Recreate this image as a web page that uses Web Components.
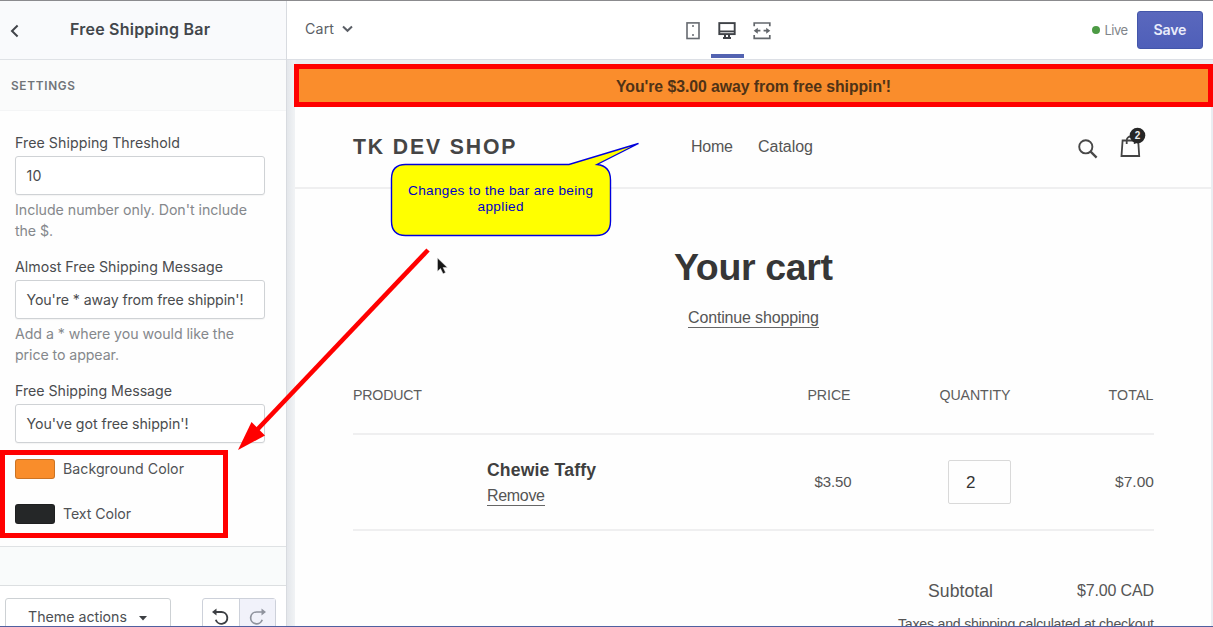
<!DOCTYPE html>
<html lang="en">
<head>
<meta charset="utf-8">
<title>Free Shipping Bar</title>
<style>
html,body{margin:0;height:100%;overflow:hidden;background:#fff}
</style>
</head>
<body>
<theme-editor></theme-editor>
<script>
const define = (name, html, ready) => customElements.define(name, class extends HTMLElement {
  connectedCallback() {
    if (this.shadowRoot) return;
    const t = document.createElement('template');
    t.innerHTML = html;
    this.attachShadow({mode: 'open'}).append(t.content.cloneNode(true));
    if (ready) ready(this, this.shadowRoot);
  }
});

/* Single line of text tracked out or in to a given measure. */
define('text-line', `<style>:host{display:block;white-space:nowrap;flex:none}span{display:inline-block;white-space:nowrap}</style><span><slot></slot></span>`, (el, root) => {
  const w = parseFloat(el.getAttribute('w'));
  if (!w) return;
  const s = root.querySelector('span');
  const n = el.textContent.length;
  el.style.width = w + 'px';
  requestAnimationFrame(() => {
    s.style.letterSpacing = '0px';
    s.style.letterSpacing = ((w - s.getBoundingClientRect().width) / (n - 1)) + 'px';
  });
});

define('setting-field', `<style>
:host{display:block;font-size:14.2px;line-height:21px;color:#4a4c4f}
.l{height:24px}
.box{box-sizing:border-box;width:250px;height:39px;border:1px solid #cfd2d5;border-radius:3px;background:#fff;padding:0 10.5px;display:flex;align-items:center;color:#4a4c4e;box-shadow:0 1px 1px #0000000a}
.h{padding-top:3.500px;color:#85888c}
</style><div class="l"><slot name="label"></slot></div><div class="box"><slot></slot></div><div class="h"><slot name="help"></slot></div>`);

define('color-setting', `<style>
:host{display:flex;align-items:center;gap:8px;height:21px;font-size:14.2px;line-height:21px;color:#505255}
i{box-sizing:border-box;width:40px;height:20px;border-radius:3px;border:1px solid #0000002e;background:var(--swatch)}
</style><i></i><slot></slot>`);

define('settings-panel', `<style>
:host{box-sizing:border-box;width:287px;height:627px;display:flex;flex-direction:column;background:#f9fbfb;border-right:1px solid #d8dbe0;font-family:Inter,sans-serif;overflow:hidden}
header{box-sizing:border-box;height:60px;flex:none;border-bottom:1px solid #dfe2e6;background:#f9fafc;display:flex;align-items:center;padding:0 0 1px 10px;font-weight:600;font-size:16px;color:#42464b}
header text-line{margin-left:51px}
header svg{margin-top:3px}
h2{margin:0;box-sizing:border-box;height:51px;flex:none;display:flex;align-items:center;padding:2px 0 0 11px;background:#fafbfb;border-bottom:1px solid #f4f5f6;font-size:11.8px;font-weight:600;color:#707479}
.body{box-sizing:border-box;height:436px;flex:none;background:#fefefe;border-bottom:1px solid #dfe2e4;padding:21px 0 0 15px}
setting-field{height:124.2px}
.colors{display:flex;flex-direction:column;gap:24px;margin-top:-46.3px}
footer{box-sizing:border-box;margin-top:38px;height:42px;flex:none;border-top:1px solid #dcdfe1;background:#fff;padding:12px 0 0 5px;display:flex;gap:31px;overflow:hidden}
.btn{box-sizing:border-box;width:166px;height:38px;flex:none;border:1px solid #cdd1d4;border-radius:3px;display:flex;align-items:center;padding:0 0 2px 22px;gap:12px;font-size:14.2px;color:#4c4f53}
.btn svg{margin-top:4px}
.grp{box-sizing:border-box;width:74px;height:38px;flex:none;border:1px solid #cdd1da;border-radius:3px;display:flex}
.grp div{flex:1;display:flex;align-items:center;justify-content:center}
.grp div+div{border-left:1px solid #cdd1da;background:#f1f2fa}
</style>
<header><svg width="9" height="14" viewBox="0 0 9 14" fill="none" stroke="#414449" stroke-width="2"><path d="M7.6 1.5 2 7l5.6 5.5"/></svg><text-line w="140">Free Shipping Bar</text-line></header>
<h2><text-line w="64">SETTINGS</text-line></h2>
<div class="body">
<setting-field><text-line slot="label" w="165">Free Shipping Threshold</text-line><text-line w="15">10</text-line><text-line slot="help" w="232">Include number only. Don't include</text-line><text-line slot="help" w="38">the $.</text-line></setting-field>
<setting-field><text-line slot="label" w="208">Almost Free Shipping Message</text-line><text-line w="217">You're * away from free shippin'!</text-line><text-line slot="help" w="219">Add a * where you would like the</text-line><text-line slot="help" w="104">price to appear.</text-line></setting-field>
<setting-field><text-line slot="label" w="157">Free Shipping Message</text-line><text-line w="162">You've got free shippin'!</text-line></setting-field>
<div class="colors">
<color-setting style="--swatch:#f98d2b"><text-line w="121">Background Color</text-line></color-setting>
<color-setting style="--swatch:#252728"><text-line w="68">Text Color</text-line></color-setting>
</div></div>
<footer><div class="btn"><text-line w="99">Theme actions</text-line><svg width="8" height="5"><path d="M0 0h8L4 4.5z" fill="#3c3f43"/></svg></div>
<div class="grp"><div><svg width="20" height="20" viewBox="0 0 20 20" fill="none" stroke="#3c3f43" stroke-width="1.9"><path d="M3 5h7.3a5.9 5.9 0 1 1-5.5 7.7"/><path d="M5.500 1.5 1 5l4.500 3.5z" fill="#3c3f43" stroke="none"/></svg></div><div><svg width="20" height="20" viewBox="0 0 20 20" fill="none" stroke="#8f939d" stroke-width="1.7"><path d="M17 5H9.7a5.9 5.9 0 1 0 5.5 7.7"/><path d="M14.500 1.5 19 5l-4.500 3.5z" fill="#8f939d" stroke="none"/></svg></div></div></footer>`);

define('editor-toolbar', `<style>
:host{box-sizing:border-box;height:60px;flex:none;border-bottom:1px solid #dcdfe5;background:#fff;display:grid;grid-template-columns:391px 1fr auto;font-family:Inter,sans-serif;font-size:14.2px;color:#5b5f66}
.page,.status{display:flex;align-items:center}
.page{padding-left:18px;gap:8px;padding-bottom:2px}
.devices{display:flex;align-items:stretch;padding-left:7px;height:59px}
.devices div{box-sizing:border-box;width:33px;display:flex;justify-content:center;padding-top:22px}
.devices .on{border-bottom:4px solid #5363b1;height:58px;margin:0 1.5px}
.devices div:first-child{margin-left:-9px}
.status{padding-right:10px;font-size:13px;color:#81858a}
i{width:8px;height:8px;border-radius:50%;background:#4c9a44;margin-right:5px}
b{box-sizing:border-box;width:66px;height:38px;margin-left:9px;border-radius:3px;border:1px solid #4356aa;background:linear-gradient(#5a68bd,#4f5fb9);color:#e9ecfa;font-size:14.2px;font-weight:600;display:flex;align-items:center;justify-content:center}
</style>
<div class="page"><text-line w="29">Cart</text-line><svg width="11" height="8" fill="none" stroke="#5b5f66" stroke-width="2"><path d="M1 1.5l4.5 4.3L10 1.5"/></svg></div>
<div class="devices">
<div><svg width="14" height="18" fill="none" stroke="#666a70" stroke-width="1.6"><rect x="1" y=".9" width="12" height="15.6"/><path d="M6 4h2M6 13h2" /></svg></div>
<div class="on"><svg width="18" height="18" fill="none" stroke="#3f4247"><rect x="1.3" y="1.1" width="15.4" height="11" stroke-width="1.9"/><path d="M1 9.4h16" stroke-width="1.8"/><path d="M7 12v3M11 12v3" stroke-width="2"/><path d="M5 16h8" stroke-width="2"/></svg></div>
<div><svg width="18" height="18" fill="none" stroke="#63676c" stroke-width="1.7"><path d="M1.2 4.2V1h15.6v3.2M1.2 13v3.3h15.6V13M3 8.7h4.4M10.6 8.7H15"/><path d="M4.8 5.7v6L.7 8.7zM13.2 5.7v6l4.1-3z" fill="#63676c" stroke="none"/></svg></div>
</div>
<div class="status"><i></i><text-line w="23.5">Live</text-line><b><text-line w="33">Save</text-line></b></div>`);

define('shipping-bar', `<style>
:host{box-sizing:border-box;height:43px;margin-left:-1px;margin-right:-2px;flex:none;background:#fa8d2c;border:5px solid red;display:flex;align-items:center;justify-content:center;font:bold 15.8px "Liberation Sans",sans-serif;color:#4f3216;padding-top:3px}
</style><slot></slot>`);

define('shop-header', `<style>
:host{box-sizing:border-box;height:82px;flex:none;border-bottom:2px solid #efeff0;display:flex;align-items:center;padding:0 0 0 58px;color:#555}
.logo{font-size:21.2px;font-weight:bold;color:#454545}
.home{margin-left:175.5px}.cat{margin-left:25px}
.search{margin-left:265px;margin-top:4px}
.bag{margin-left:21.5px;margin-top:-8px}
</style><text-line class="logo" w="162.5">TK DEV SHOP</text-line><text-line class="home" w="42">Home</text-line><text-line class="cat" w="55">Catalog</text-line>
<svg class="search" width="20" height="20" fill="none" stroke="#484848"><circle cx="7.8" cy="7.8" r="6.6" stroke-width="1.9"/><path d="m12.6 12.6 6 6" stroke-width="2.3"/></svg>
<svg class="bag" width="28" height="32" viewBox="0 0 28 32"><path d="M2.6 13.5h15.6l1 15.5H1.5z M6.7 17v-3.5a4 4 0 0 1 8 0V17" fill="none" stroke="#444" stroke-width="1.8"/><circle cx="17.5" cy="8.6" r="7.8" fill="#262626"/><text x="17.5" y="12.3" text-anchor="middle" font-family="Liberation Sans,sans-serif" font-weight="bold" font-size="10" fill="#eee">2</text></svg>`);

define('cart-view', `<style>
:host{display:block;padding:0 57px 0 58px;color:#555}
.title{height:159px;box-sizing:border-box;padding-top:54px;display:flex;flex-direction:column;align-items:center}
h1{margin:0;font-size:37.5px;line-height:48px;color:#363636}
.ul{border-bottom:1px solid #666}
.title .ul{margin-top:17px;line-height:19px;height:19px}
.row{display:grid;border-bottom:2px solid #efeff0;box-sizing:border-box;align-items:center}
.head{height:87px;padding-top:8px;font-size:14.2px;grid-template-columns:400px 97.5px 160px 143px;color:#5c5c5c}
.item{height:96px;grid-template-columns:134px 364.5px 159.5px 143px}
.row>*{justify-self:end}.row>.s{justify-self:start}
.name{font-size:17.6px;font-weight:bold;color:#3f3f3f;line-height:22px}
.rm{line-height:21px;height:20px;margin-top:4px}
.q{box-sizing:border-box;width:63px;height:44px;border:1.5px solid #d9d9d9;border-radius:2px;display:flex;align-items:center;padding:2px 0 0 17px;font-size:17px;color:#333}
.sum{padding-top:50px;display:flex;justify-content:flex-end;gap:84px;align-items:center;line-height:20px}
.tax{font-size:14.2px;line-height:20px;margin-top:13px;display:flex;justify-content:flex-end}
</style>
<div class="title"><h1><text-line w="159">Your cart</text-line></h1><text-line class="ul" w="131">Continue shopping</text-line></div>
<div class="row head"><text-line class="s" w="69">PRODUCT</text-line><text-line w="43">PRICE</text-line><text-line w="71">QUANTITY</text-line><text-line w="45">TOTAL</text-line></div>
<div class="row item"><span></span><div style="display:grid;grid-template-columns:1fr auto;width:364.5px;align-items:center"><div><text-line class="name" w="109">Chewie Taffy</text-line><text-line class="rm ul" w="58">Remove</text-line></div><text-line w="37" style="font-size:15px;padding-bottom:1px">$3.50</text-line></div><div class="q">2</div><text-line w="39" style="font-size:15.5px">$7.00</text-line></div>
<div class="sum"><text-line w="65" style="font-size:17.6px">Subtotal</text-line><text-line w="77">$7.00 CAD</text-line></div>
<div class="tax"><text-line w="256">Taxes and shipping calculated at checkout</text-line></div>`);

define('store-preview', `<style>
:host{display:flex;flex-direction:column;height:567px;box-sizing:border-box;background:linear-gradient(90deg,#e4e7eb,#f1f3f5 8px,#eaedf2 9px);padding:4px 2px 0 8px;font:16px "Liberation Sans",sans-serif}
.page{background:#fefefe;flex:1;min-height:0;overflow:hidden}
</style><shipping-bar><text-line w="275">You're $3.00 away from free shippin'!</text-line></shipping-bar><div class="page"><shop-header></shop-header><cart-view></cart-view></div>`);

/* Mark-up layer: highlight frame, arrow, speech balloon and pointer. */
define('markup-layer', `<style>
:host{position:absolute;inset:0;pointer-events:none}
svg{position:absolute;left:0;top:0}
.say{position:absolute;left:391px;top:183px;width:219px;display:flex;flex-direction:column;align-items:center;font:13.6px/16px "Liberation Sans",sans-serif;color:#0000c8}
</style><svg width="1213" height="627">
<rect x="2.5" y="452.5" width="223" height="83" fill="none" stroke="red" stroke-width="5"/>
<path d="M428 250 255 432" stroke="red" stroke-width="4.6"/><path d="m238 450 13.5-28L265 435.5z" fill="red"/>
<path d="M405.5 164.5H569L638.5 143.500 597 164.500Q610.500 166 610.500 180V221Q610.500 235.500 596 235.500H405.500Q391.500 235.500 391.500 221V179Q391.500 164.500 405.500 164.500Z" fill="#ff0" stroke="#00d" stroke-width="1.4"/>
<path d="M437.500 258v13.200l3-2.700 2.600 5.200 2.400-1.200-2.400-5h4.200z" fill="#161616" stroke="#ddd" stroke-width=".5"/>
<path d="M0 .5H1213" stroke="#8b8b8e"/><path d="M0 626.500H1213" stroke="#5060a0"/>
</svg><div class="say"><text-line w="185">Changes to the bar are being</text-line><text-line w="46">applied</text-line></div>`);

define('theme-editor', `<style>
:host{display:flex;position:relative;width:1213px;height:627px;overflow:hidden}
main{flex:1;min-width:0;display:flex;flex-direction:column}
</style><settings-panel></settings-panel><main><editor-toolbar></editor-toolbar><store-preview></store-preview></main><markup-layer></markup-layer>`);
</script>
</body>
</html>
